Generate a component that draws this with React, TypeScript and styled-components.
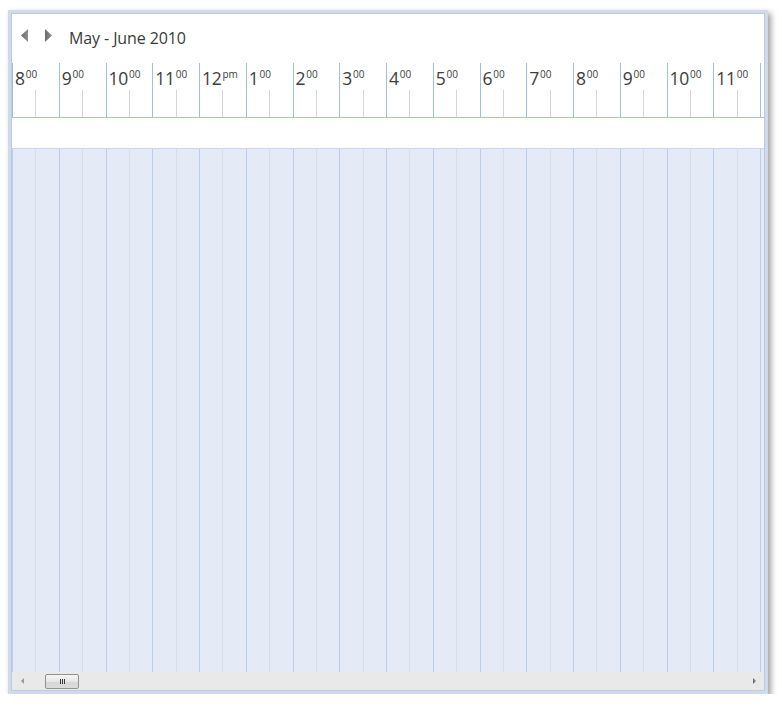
import React from "react";
import styled, { createGlobalStyle } from "styled-components";

const Global = createGlobalStyle`
  html, body { margin: 0; padding: 0; background: #ffffff; }
  body { font-family: "Open Sans", "Noto Sans", "Liberation Sans", sans-serif; }
`;

const COL = 46.75;
const hours: { h: string; s: string }[] = [
  { h: "8", s: "00" }, { h: "9", s: "00" }, { h: "10", s: "00" }, { h: "11", s: "00" },
  { h: "12", s: "pm" }, { h: "1", s: "00" }, { h: "2", s: "00" }, { h: "3", s: "00" },
  { h: "4", s: "00" }, { h: "5", s: "00" }, { h: "6", s: "00" }, { h: "7", s: "00" },
  { h: "8", s: "00" }, { h: "9", s: "00" }, { h: "10", s: "00" }, { h: "11", s: "00" },
  { h: "", s: "" },
];

const Page = styled.div`
  padding: 10px 0 0 8px;
`;

const Window = styled.div`
  width: 760px;
  height: 684px;
  box-sizing: border-box;
  border: 4px solid #cfdbeb;
  outline: 1px solid #bccbe0;
  outline-offset: -4px;
  box-shadow: 3px 3px 6px rgba(0, 0, 0, 0.38);
  background: #ffffff;
  display: flex;
  flex-direction: column;
  overflow: hidden;
`;

const Header = styled.div`
  height: 49px;
  display: flex;
  align-items: center;
  padding-left: 9px;
  box-sizing: border-box;
  padding-bottom: 6px;
`;

const NavButton = styled.button`
  width: 24px;
  height: 20px;
  border: none;
  background: transparent;
  padding: 0;
  display: flex;
  align-items: center;
  justify-content: flex-start;
`;

const Title = styled.span`
  font-size: 16px;
  color: #3a3a3a;
  letter-spacing: -0.1px;
  margin-top: 4px;
`;

const Track = styled.div`
  display: flex;
  width: ${COL * 17}px;
`;

const Ruler = styled(Track)`
  height: 55px;
  box-sizing: border-box;
  border-bottom: 1px solid #a9c0e0;
`;

const RulerCol = styled.div`
  flex: 0 0 ${COL}px;
  box-sizing: border-box;
  border-left: 1px solid #a3bcdf;
  display: flex;
  flex-direction: column;
`;

const Label = styled.div`
  height: 27px;
  padding-left: 2px;
  font-size: 17.5px;
  line-height: 22px;
  color: #3c3c3c;
  white-space: nowrap;
  letter-spacing: -0.3px;
`;

const Sup = styled.span`
  font-size: 10px;
  vertical-align: 7px;
  margin-left: 1px;
  letter-spacing: 0;
`;

const Halves = styled.div`
  flex: 1;
  display: flex;
`;

const Half = styled.div<{ $line?: string }>`
  flex: 1;
  box-sizing: border-box;
  border-left: ${(p) => (p.$line ? `1px solid ${p.$line}` : "none")};
`;

const AllDayRow = styled.div`
  height: 31px;
  box-sizing: border-box;
  border-bottom: 1px solid #c8d8ee;
  background: #ffffff;
`;

const Grid = styled(Track)`
  flex: 1;
  background: #e4ebf6;
`;

const GridCol = styled.div`
  flex: 0 0 ${COL}px;
  box-sizing: border-box;
  border-left: 1px solid #bccfea;
  display: flex;
`;

const ScrollBar = styled.div`
  height: 18px;
  background: #e9e9e9;
  display: flex;
  align-items: center;
  box-sizing: border-box;
  padding: 0 4px 0 4px;
`;

const ScrollArrow = styled.div`
  width: 12px;
  height: 12px;
  display: flex;
  align-items: center;
  justify-content: center;
`;

const Thumb = styled.div`
  margin-left: 17px;
  width: 34px;
  height: 15px;
  box-sizing: border-box;
  border: 1px solid #8f9092;
  border-radius: 2px;
  background: linear-gradient(#f6f6f6, #e6e6e6 50%, #d6d6d6 51%, #dcdcdc);
  display: flex;
  align-items: center;
  justify-content: center;
  gap: 1px;
`;

const Grip = styled.div`
  width: 1px;
  height: 5px;
  background: #3a3a3a;
`;

const Spacer = styled.div`
  flex: 1;
`;

const Tri = ({ dir, color, w, h }: { dir: "l" | "r"; color: string; w: number; h: number }) => (
  <svg width={w} height={h} viewBox={`0 0 ${w} ${h}`}>
    <defs>
      <linearGradient id={`g${dir}${w}`} x1="0" y1="0" x2="1" y2="0">
        <stop offset="0" stopColor={color} />
        <stop offset="1" stopColor={color} stopOpacity="0.75" />
      </linearGradient>
    </defs>
    {dir === "l" ? (
      <polygon points={`${w},0 ${w},${h} 0,${h / 2}`} fill={`url(#g${dir}${w})`} />
    ) : (
      <polygon points={`0,0 0,${h} ${w},${h / 2}`} fill={`url(#g${dir}${w})`} />
    )}
  </svg>
);

export default function App() {
  return (
    <>
      <Global />
      <Page>
        <Window>
          <Header>
            <NavButton aria-label="previous">
              <Tri dir="l" color="#6b6b6b" w={7} h={13} />
            </NavButton>
            <NavButton aria-label="next">
              <Tri dir="r" color="#6b6b6b" w={7} h={13} />
            </NavButton>
            <Title>May - June 2010</Title>
          </Header>
          <Ruler>
            {hours.map((t, i) => (
              <RulerCol key={i}>
                <Label>
                  {t.h}
                  {t.s && <Sup>{t.s}</Sup>}
                </Label>
                <Halves>
                  <Half />
                  <Half $line="#d6d6d6" />
                </Halves>
              </RulerCol>
            ))}
          </Ruler>
          <AllDayRow />
          <Grid>
            {hours.map((_, i) => (
              <GridCol key={i}>
                <Half />
                <Half $line="#d3dff0" />
              </GridCol>
            ))}
          </Grid>
          <ScrollBar>
            <ScrollArrow>
              <Tri dir="l" color="#8a8a8a" w={3} h={6} />
            </ScrollArrow>
            <Thumb>
              <Grip />
              <Grip />
              <Grip />
            </Thumb>
            <Spacer />
            <ScrollArrow>
              <Tri dir="r" color="#6a6a6a" w={3} h={6} />
            </ScrollArrow>
          </ScrollBar>
        </Window>
      </Page>
    </>
  );
}
